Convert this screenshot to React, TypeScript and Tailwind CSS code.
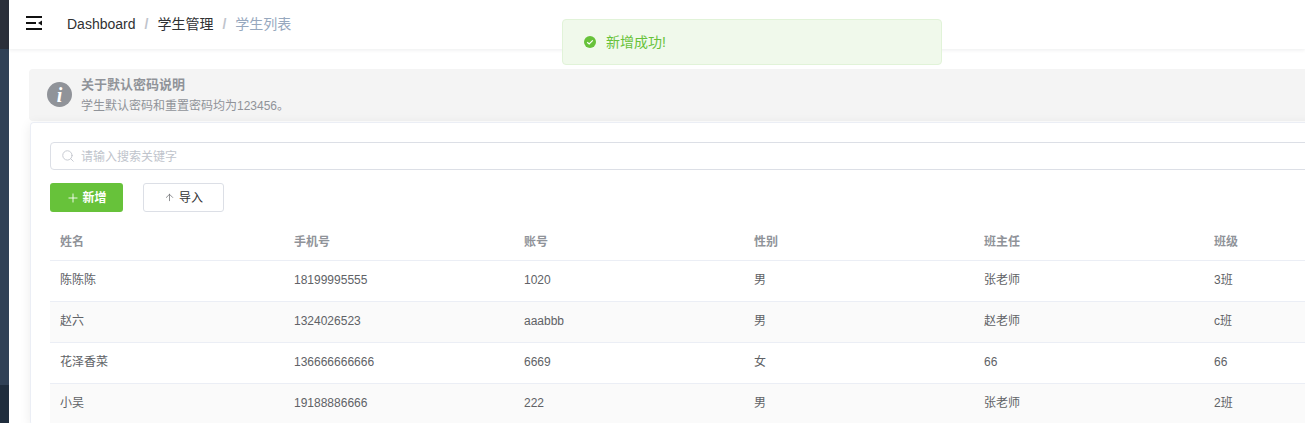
import React from 'react';
import { Search, Plus, ArrowUp } from 'lucide-react';

interface Student {
  name: string;
  phone: string;
  account: string;
  gender: string;
  teacher: string;
  className: string;
}

const students: Student[] = [
  { name: '陈陈陈', phone: '18199995555', account: '1020', gender: '男', teacher: '张老师', className: '3班' },
  { name: '赵六', phone: '1324026523', account: 'aaabbb', gender: '男', teacher: '赵老师', className: 'c班' },
  { name: '花泽香菜', phone: '136666666666', account: '6669', gender: '女', teacher: '66', className: '66' },
  { name: '小吴', phone: '19188886666', account: '222', gender: '男', teacher: '张老师', className: '2班' },
];

const colClass = 'grid grid-cols-[234px_230px_230px_230px_230px_230px]';

const App: React.FC = () => {
  return (
    <div className="relative flex h-[423px] w-[1305px] overflow-hidden bg-white font-['Liberation_Sans','Noto_Sans_CJK_SC',sans-serif] text-[12px] text-[#606266]">
      {/* Sidebar */}
      <div className="flex w-[9px] shrink-0 flex-col bg-[#304156]">
        <div className="h-[49px] bg-[#2b2f3a]"></div>
        <div className="flex-1"></div>
        <div className="h-[38px] bg-[#1f2d3d]"></div>
      </div>

      <div className="min-w-0 flex-1">
        {/* Navbar */}
        <div className="flex h-[49px] items-center bg-white pb-[1px] shadow-[0_1px_4px_rgba(0,21,41,0.08)]">
          <svg className="mb-[2px] ml-[17px]" width="16" height="14" viewBox="0 0 16 14">
            <path d="M0 1h16M0 7h10M0 13h16" stroke="#111" strokeWidth="1.8" fill="none" />
            <path d="M16 4.5v5L12 7z" fill="#111" />
          </svg>
          <div className="ml-[25px] flex items-center text-[14px]">
            <span className="text-[#303133]">Dashboard</span>
            <span className="mx-[9px] font-bold text-[#c0c4cc]">/</span>
            <span className="text-[#303133]">学生管理</span>
            <span className="mx-[9px] font-bold text-[#c0c4cc]">/</span>
            <span className="text-[#97a8be]">学生列表</span>
          </div>
        </div>

        {/* Content */}
        <div className="w-[1296px] pl-[20px] pt-[20px]">
          <div className="flex h-[52px] w-[1300px] items-center rounded-l-[4px] bg-[#f4f4f4] pl-[18px]">
            <div className="mb-[1px] flex h-[25px] w-[25px] items-center justify-center rounded-full bg-[#909399] font-['Liberation_Serif',serif] text-[20px] font-bold italic leading-none text-white">
              i
            </div>
            <div className="ml-[9px]">
              <div className="text-[13px] font-bold leading-[18px] text-[#909399]">关于默认密码说明</div>
              <div className="mt-[4px] text-[12px] leading-[16px] text-[#909399]">学生默认密码和重置密码均为123456。</div>
            </div>
          </div>

          <div className="ml-px mt-px w-[1300px] rounded-l-[4px] border-l border-t border-[#ebeef5] pl-[19px] pt-[19px] shadow-[0_2px_12px_0_rgba(0,0,0,0.08)]">
            <div className="flex h-[28px] items-center rounded-l-[4px] border border-[#dcdfe6] pl-[10px]">
              <Search size={14} strokeWidth={1.5} className="text-[#c0c4cc]" />
              <span className="ml-[6px] pt-[1px] text-[#c0c4cc]">请输入搜索关键字</span>
            </div>

            <div className="mt-[13px] flex">
              <button className="flex h-[29px] w-[73px] items-center justify-center rounded-[3px] bg-[#67c23a] font-bold text-white">
                <Plus size={14} strokeWidth={1.5} />
                <span className="ml-[2px]">新增</span>
              </button>
              <button className="ml-[20px] flex h-[29px] w-[81px] items-center justify-center rounded-[3px] border border-[#dcdfe6] bg-white text-[#303133]">
                <ArrowUp size={11} strokeWidth={1.5} className="text-[#606266]" />
                <span className="ml-[4px]">导入</span>
              </button>
            </div>

            <div className="mt-[13px]">
              <div className={`${colClass} h-[36px] items-center border-b border-[#ebeef5] pb-[1px] font-bold text-[#909399]`}>
                <div className="pl-[10px]">姓名</div>
                <div className="pl-[10px]">手机号</div>
                <div className="pl-[10px]">账号</div>
                <div className="pl-[10px]">性别</div>
                <div className="pl-[10px]">班主任</div>
                <div className="pl-[10px]">班级</div>
              </div>
              {students.map((s, i) => (
                <div
                  key={s.phone}
                  className={`${colClass} h-[41px] items-center border-b border-[#ebeef5] pb-[2px] ${i % 2 === 1 ? 'bg-[#fafafa]' : 'bg-white'}`}
                >
                  <div className="pl-[10px]">{s.name}</div>
                  <div className="pl-[10px]">{s.phone}</div>
                  <div className="pl-[10px]">{s.account}</div>
                  <div className="pl-[10px]">{s.gender}</div>
                  <div className="pl-[10px]">{s.teacher}</div>
                  <div className="pl-[10px]">{s.className}</div>
                </div>
              ))}
            </div>
          </div>
        </div>
      </div>

      {/* Toast */}
      <div className="absolute left-[562px] top-[19px] flex h-[46px] w-[380px] items-center rounded-[4px] border border-[#e1f3d8] bg-[#f0f9eb] pl-[21px]">
        <svg width="12" height="12" viewBox="0 0 12 12">
          <circle cx="6" cy="6" r="6" fill="#67c23a" />
          <path d="M3.2 6.2l2 1.8 3.6-3.6" stroke="#fff" strokeWidth="1.2" fill="none" />
        </svg>
        <span className="ml-[10px] text-[14px] text-[#67c23a]">新增成功!</span>
      </div>
    </div>
  );
};

export default App;
